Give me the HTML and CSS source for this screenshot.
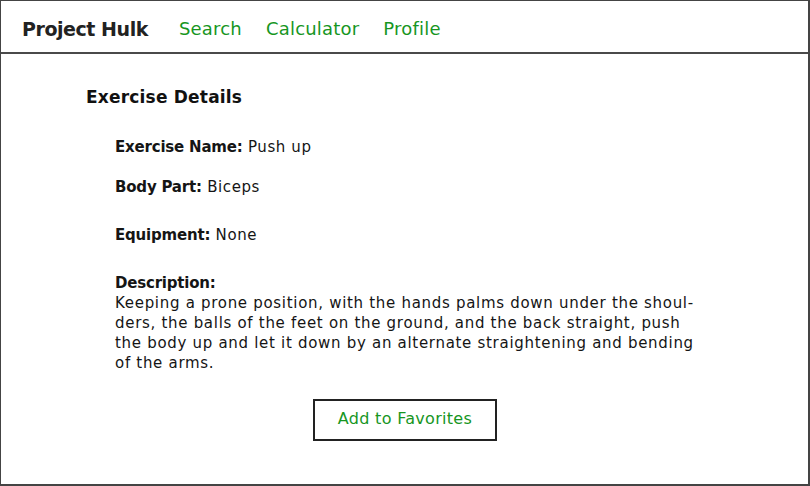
FILE: index.html
```html
<!DOCTYPE html>
<html lang="en">
<head>
<meta charset="utf-8">
<title>Project Hulk</title>
<link rel="stylesheet" href="styles.css">
</head>
<body>
<div class="frame">
  <header class="topbar">
    <span class="brand">Project Hulk</span>
    <nav class="nav">
      <a class="nav-link" href="#">Search</a>
      <a class="nav-link" href="#">Calculator</a>
      <a class="nav-link" href="#">Profile</a>
    </nav>
  </header>
  <main class="content">
    <h2 class="title">Exercise Details</h2>
    <div class="details">
      <p class="row row-name"><b>Exercise Name:</b> Push up</p>
      <p class="row row-part"><b>Body Part:</b> Biceps</p>
      <p class="row row-equip"><b>Equipment:</b> None</p>
      <p class="row row-desc"><b>Description:</b></p>
      <p class="desc">Keeping a prone position, with the hands palms down under the shoul&shy;ders, the balls of the feet on the ground, and the back straight, push the body up and let it down by an alternate straightening and bending of the arms.</p>
    </div>
    <div class="actions">
      <button class="fav-btn">Add to Favorites</button>
    </div>
  </main>
</div>
</body>
</html>
```
FILE: styles.css
```css
* { box-sizing: border-box; }
html, body { margin: 0; padding: 0; background: #fff; }
body { font-family: "DejaVu Sans", "Open Sans", sans-serif; color: #151515; }
.frame {
  width: 810px;
  height: 486px;
  border-top: 1px solid #444;
  border-left: 1px solid #444;
  border-right: 2px solid #444;
  border-bottom: 2px solid #444;
  display: flex;
  flex-direction: column;
}
.topbar {
  height: 53px;
  border-bottom: 2px solid #4a4a4a;
  display: flex;
  align-items: center;
  padding-left: 21px;
  padding-top: 4px;
}
.brand { font-size: 19px; font-weight: 700; color: #222; letter-spacing: -0.45px; }
.nav { display: flex; gap: 24px; margin-left: 31px; }
.nav-link { font-size: 18px; color: #17961f; text-decoration: none; letter-spacing: 0.2px; }
.content { padding: 31px 0 0 85px; }
.title { margin: 0; font-size: 17px; line-height: 24px; font-weight: 700; color: #111; letter-spacing: 0.2px; }
.details { padding-left: 29px; margin-top: 28px; }
.row { margin: 0; font-size: 15px; line-height: 20px; letter-spacing: 0.6px; }
.row b { font-weight: 700; letter-spacing: -0.2px; }
.row-part { margin-top: 20px; }
.row-equip { margin-top: 28px; }
.row-desc { margin-top: 28px; }
.desc { margin: 0; font-size: 15px; line-height: 20px; width: 592px; hyphens: manual; letter-spacing: 0.7px; }
.actions { display: flex; padding-left: 227px; margin-top: 26px; }
.fav-btn {
  width: 184px;
  height: 42px;
  border: 2px solid #222;
  background: #fff;
  font-family: inherit;
  font-size: 16px;
  color: #17961f;
  padding: 0 0 3px;
  letter-spacing: 0.3px;
}
```
